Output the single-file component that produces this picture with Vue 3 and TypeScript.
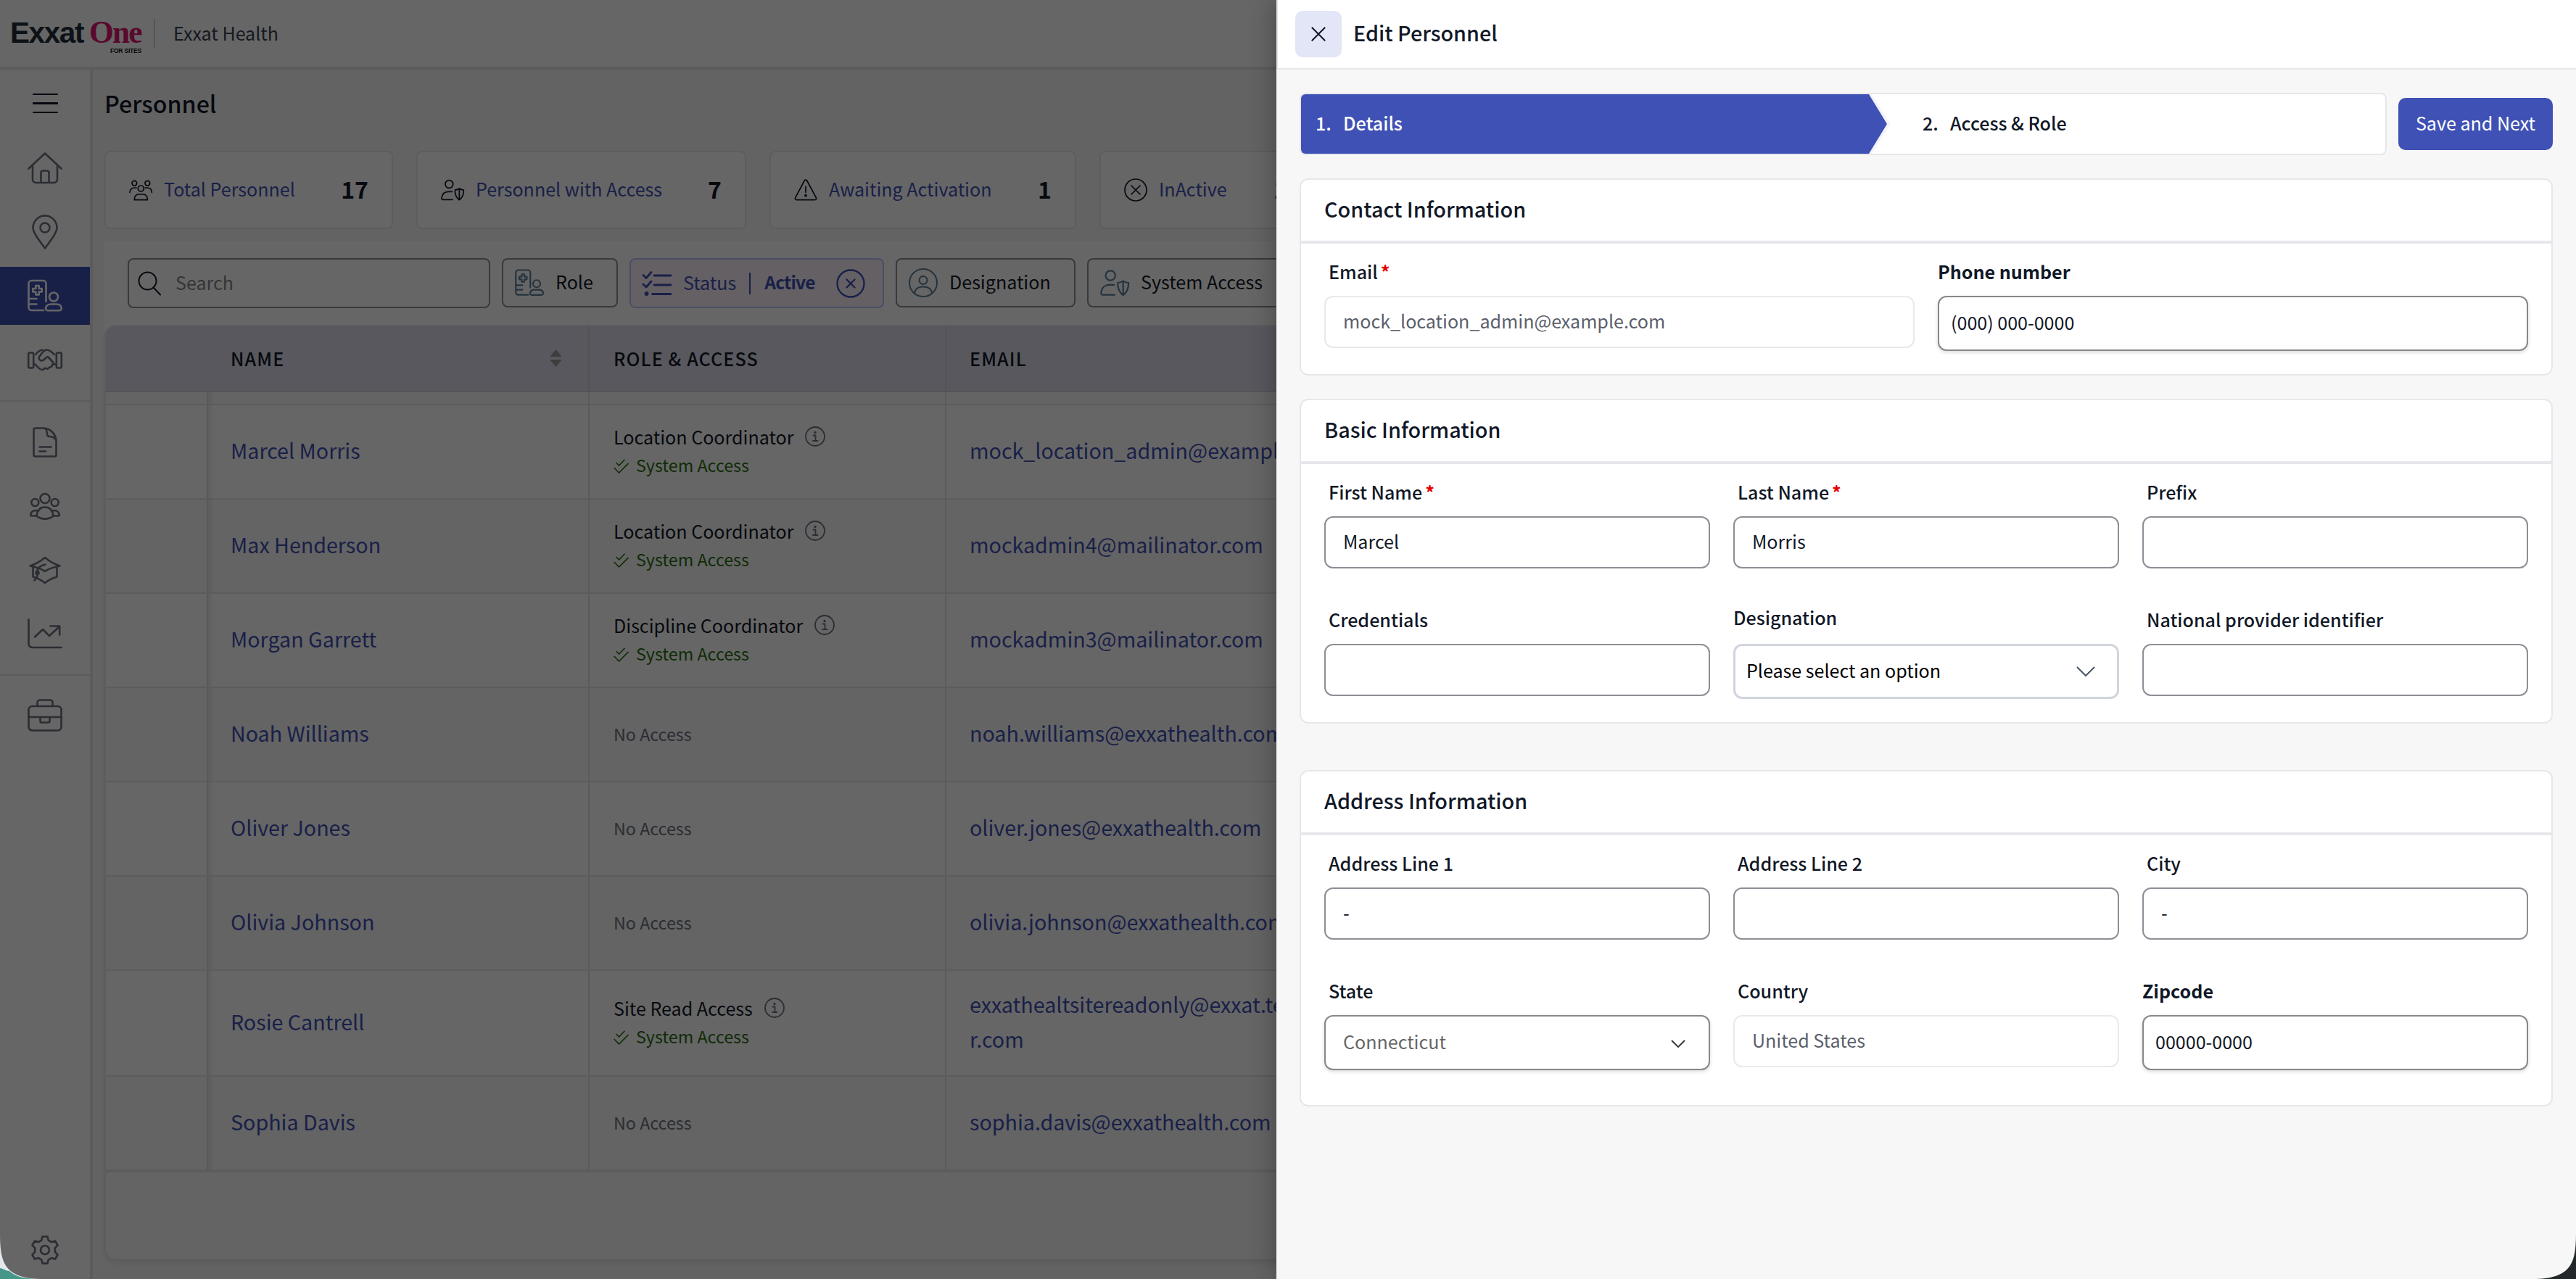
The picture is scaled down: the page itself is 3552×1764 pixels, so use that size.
<script setup lang="ts">
interface NavItem { icon: string; active?: boolean; dividerAfter?: boolean }
interface Stat { label: string; count: string; width: number; icon: string }
interface Row { name: string; role?: string; email: string[]; height: number }
interface Field {
  label: string
  value?: string
  kind?: 'muted' | 'shadow' | 'select' | 'state'
  required?: boolean
  flush?: boolean
  heavy?: boolean
}
interface Section { title: string; columns: number; fields: Field[]; cls: string }

const badge =
  '<path d="M25.5 32V7a4 4 0 0 0-4-4H5.5a4 4 0 0 0-4 4V40a4 4 0 0 0 4 4H22M1.5 28H12.5M1.5 35.5H12.5"/><path d="M11.3 10h4.4v4h4v4.4h-4v4h-4.4v-4h-4V14h4z"/><circle cx="36" cy="25.5" r="6"/><path d="M28 44.2a3 3 0 0 1-3-3.2c.6-3.8 3.6-5.500 8-5.500h6.500c4.400 0 6.900 1.700 7.300 5.500a3 3 0 0 1-3 3.200z"/>'
const userShield =
  '<circle cx="17" cy="12" r="8"/><path d="M24 44H4a2.500 2.500 0 0 1-2.500-2.500C2 32 8 27.500 16 27.500H23"/><path d="M38 21c3 2.200 5.500 3 9 3 0 10-2.500 16-9 20.500C31.500 40 29 34 29 24c3.500 0 6-.8 9-3zM38 21V44"/>'
const crossCircle = '<circle cx="24" cy="24" r="22.500"/><path d="M15 15 33 33M33 15 15 33"/>'

const nav: NavItem[] = [
  { icon: '<path d="M1.500 24.500 24 3.500 46.500 24.500M7 20V39.500a4.500 4.500 0 0 0 4.500 4.500h25a4.500 4.500 0 0 0 4.500-4.500V20M18.500 44V30a2.500 2.500 0 0 1 2.500-2.500h6a2.500 2.500 0 0 1 2.500 2.500V44"/>' },
  { icon: '<path d="M24 46.500C20 40 7.500 27 7.500 18a16.500 16.500 0 0 1 33 0C40.500 27 28 40 24 46.500z"/><circle cx="24" cy="18" r="6.500"/>' },
  { icon: badge, active: true },
  { icon: '<rect x="1.200" y="14.500" width="7" height="21" rx="2"/><rect x="39.800" y="14.500" width="7" height="21" rx="2"/><path d="M11 17c3-4 6-6 9.500-6.500M37 17c-4-4-7-6.500-10-6.500-2.500 0-4 .8-6 3l-4.500 6c-2 3 .5 7 4.500 5.500 2.500-1 4-4 7-5l7 7.500c2 2.500.5 4-1.500 4M8.500 29.500c5 2 7 8.500 11.500 8.500 2.500 0 2.500-1.500 4-2.500 3 2 5 1 6-1 3 .5 4-1.500 4.500-4H39.500"/>', dividerAfter: true },
  { icon: '<path d="M10.500 4.500H23c9 1 15.500 8 16.500 17V41.500a2 2 0 0 1-2 2h-27a2 2 0 0 1-2-2v-35a2 2 0 0 1 2-2zM23.500 4.500c3 2 3.500 5 3.500 8.500a3 3 0 0 0 3 3c4.500 0 8 2 9.500 5.500M16.500 30.500H32.500M16.500 36.500H25"/>' },
  { icon: '<circle cx="24" cy="13.500" r="6.500"/><circle cx="10.300" cy="19" r="5"/><circle cx="37.700" cy="19" r="5"/><path d="M12.500 37.500C13.500 29 18 25.500 24 25.500s10.500 3.500 11.500 12c-6 5.500-17 5.500-23 0zM12.500 37.500H5.500c-1.500 0-1.500-1-1-2.500 1-4 5-6 10-4.500M35.500 37.500h7c1.500 0 1.500-1 1-2.500-1-4-5-6-10-4.500"/>' },
  { icon: '<path d="M3.500 18.500C11 16 18 12 24 7c6 5 13 9 20.500 11.500C37 20 30 22 24 26 18 22 11 20 3.500 18.500zM7.500 20V33.500C13 35 19 38 24 42c5-4 11-7 16.500-8.500V20M24.500 16.500C19 18 14.500 21 13.500 24V33L9.500 38.500"/><circle cx="13.500" cy="28" r="2" fill="currentColor"/>' },
  { icon: '<path d="M1.500 4.500V38a5 5 0 0 0 5 5H46.500M10 28.500 21 18l9 9L44 14M31.500 13.500H44.200V25.500"/>', dividerAfter: true },
  { icon: '<rect x="1.500" y="12" width="45" height="33.500" rx="5"/><path d="M13.500 12V7a3.500 3.500 0 0 1 3.500-3.500h14a3.500 3.500 0 0 1 3.500 3.500v5M1.500 27H46.500M17.500 27v5.500a2 2 0 0 0 2 2h9a2 2 0 0 0 2-2V27"/>' },
]

const stats: Stat[] = [
  { label: 'Total Personnel', count: '17', width: 398, icon: '<circle cx="11" cy="10" r="5"/><circle cx="38" cy="10" r="5"/><circle cx="24.500" cy="21" r="6"/><path d="M1.500 29c.5-7 4-9.500 9.500-9.500h4M47 29c-.5-7-4-9.500-9.500-9.500h-4M11 44.500c0-8 4-11.500 9-11.500h9c5 0 9 3.500 9 11.500z"/>' },
  { label: 'Personnel with Access', count: '7', width: 455, icon: userShield },
  { label: 'Awaiting Activation', count: '1', width: 423, icon: '<path d="M21.500 4.500a3 3 0 0 1 5 0L45.500 40a3 3 0 0 1-2.500 4.500H5A3 3 0 0 1 2.500 40zM24 17V29"/><circle cx="24" cy="35.500" r="1.500" fill="currentColor"/>' },
  { label: 'InActive', count: '1', width: 293, icon: crossCircle },
]

const rows: Row[] = [
  { name: 'Marcel Morris', role: 'Location Coordinator', email: ['mock_location_admin@example.com'], height: 130 },
  { name: 'Max Henderson', role: 'Location Coordinator', email: ['mockadmin4@mailinator.com'], height: 130 },
  { name: 'Morgan Garrett', role: 'Discipline Coordinator', email: ['mockadmin3@mailinator.com'], height: 130 },
  { name: 'Noah Williams', email: ['noah.williams@exxathealth.com'], height: 130 },
  { name: 'Oliver Jones', email: ['oliver.jones@exxathealth.com'], height: 130 },
  { name: 'Olivia Johnson', email: ['olivia.johnson@exxathealth.com'], height: 130 },
  { name: 'Rosie Cantrell', role: 'Site Read Access', email: ['exxathealtsitereadonly@exxat.te', 'r.com'], height: 146 },
  { name: 'Sophia Davis', email: ['sophia.davis@exxathealth.com'], height: 130 },
]

const sections: Section[] = [
  {
    title: 'Contact Information', columns: 2, cls: '',
    fields: [
      { label: 'Email', value: 'mock_location_admin@example.com', kind: 'muted', required: true },
      { label: 'Phone number', value: '(000) 000-0000', kind: 'shadow', flush: true, heavy: true },
    ],
  },
  {
    title: 'Basic Information', columns: 3, cls: 'basic',
    fields: [
      { label: 'First Name', value: 'Marcel', required: true },
      { label: 'Last Name', value: 'Morris', required: true },
      { label: 'Prefix' },
      { label: 'Credentials' },
      { label: 'Designation', value: 'Please select an option', kind: 'select', flush: true },
      { label: 'National provider identifier' },
    ],
  },
  {
    title: 'Address Information', columns: 3, cls: 'address',
    fields: [
      { label: 'Address Line 1', value: '-' },
      { label: 'Address Line 2' },
      { label: 'City', value: '-' },
      { label: 'State', value: 'Connecticut', kind: 'state' },
      { label: 'Country', value: 'United States', kind: 'muted' },
      { label: 'Zipcode', value: '00000-0000', kind: 'shadow', flush: true, heavy: true },
    ],
  },
]
</script>

<template>
  <div class="screen">
    <div class="app">
      <header class="topbar">
        <div class="logo">
          <div class="logo-row"><span class="logo-a">Exxat</span><span class="logo-b">One</span></div>
          <span class="logo-sub">FOR SITES</span>
        </div>
        <span class="bar"></span>
        <span class="org">Exxat Health</span>
      </header>
      <div class="below">
        <nav class="side">
          <div class="burger"><i></i><i></i><i></i></div>
          <template v-for="(n, i) in nav" :key="i">
            <div class="nav" :class="{ active: n.active }">
              <svg viewBox="0 0 48 48" class="ic48" v-html="n.icon"></svg>
            </div>
            <div v-if="n.dividerAfter" class="nav-div"></div>
          </template>
          <div class="gear">
            <svg viewBox="0 0 48 48" class="ic48">
              <circle cx="24" cy="24" r="6" />
              <path d="M20.500 5.500h7l1.300 5.200a14 14 0 0 1 4 2.300l5.200-1.500 3.500 6-3.800 3.800a14 14 0 0 1 0 5.400l3.800 3.800-3.500 6-5.200-1.500a14 14 0 0 1-4 2.300l-1.300 5.200h-7l-1.300-5.200a14 14 0 0 1-4-2.300L10 36.500l-3.500-6 3.800-3.800a14 14 0 0 1 0-5.400L6.500 17.500l3.500-6 5.200 1.500a14 14 0 0 1 4-2.300z" />
            </svg>
          </div>
        </nav>
        <main class="main">
          <h1 class="title">Personnel</h1>
          <div class="stats">
            <div v-for="s in stats" :key="s.label" class="stat" :style="{ width: s.width + 'px' }">
              <svg viewBox="0 0 48 48" class="ic32" v-html="s.icon"></svg>
              <span class="stat-label">{{ s.label }}</span>
              <span class="stat-count">{{ s.count }}</span>
            </div>
          </div>
          <section class="panel">
            <div class="tools">
              <div class="search">
                <svg viewBox="0 0 32 34" width="34" height="34" class="ln"><circle cx="13.500" cy="13.500" r="12" /><path d="M21.500 22.500 31 32.500" /></svg>
                <span>Search</span>
              </div>
              <div class="chip role-chip"><svg viewBox="0 0 48 48" class="ic40" v-html="badge"></svg><span>Role</span></div>
              <div class="chip status-chip">
                <svg viewBox="0 0 40 34" width="40" height="34" class="ln thick"><path d="M1 5.500 5 9.500 12 1.500M16 6H39M1 18 5 22 12 14M16 19H39M13.500 31.500H39" /><circle cx="5.500" cy="31" r="1.500" fill="currentColor" /></svg>
                <span class="st">Status</span><i class="st-bar"></i><b>Active</b>
                <svg viewBox="0 0 40 40" width="40" height="40" class="ln thick x"><circle cx="20" cy="20" r="18.500" /><path d="M14.500 14.500 25.500 25.500M25.500 14.500 14.500 25.500" /></svg>
              </div>
              <div class="chip desig-chip">
                <svg viewBox="0 0 40 40" width="40" height="40" class="ln"><circle cx="20" cy="20" r="19" /><circle cx="20" cy="16.500" r="5.500" /><path d="M8 34c1-6 5-8.500 12-8.500S31 28 32 34" /></svg>
                <span>Designation</span>
              </div>
              <div class="chip access-chip"><svg viewBox="0 0 48 48" class="ic40" v-html="userShield"></svg><span>System Access</span></div>
            </div>
            <div class="table">
              <div class="thead">
                <div class="c0"></div>
                <div class="c1">NAME
                  <svg viewBox="0 0 15 24" width="15" height="24"><path d="M7.500 0 15 9v1H0V9zM7.500 24 15 15v-1H0v1z" fill="currentColor" /></svg>
                </div>
                <div class="c2">ROLE &amp; ACCESS</div>
                <div class="c3">EMAIL</div>
              </div>
              <div class="trow stub"><div class="c0"></div><div class="c1"></div><div class="c2"></div><div class="c3"></div></div>
              <div v-for="r in rows" :key="r.name" class="trow" :style="{ height: r.height + 'px' }">
                <div class="c0"></div>
                <div class="c1 link">{{ r.name }}</div>
                <div class="c2">
                  <template v-if="r.role">
                    <div class="role">{{ r.role }}
                      <svg viewBox="0 0 28 28" width="28" height="28" class="ln"><circle cx="14" cy="14" r="13" /><path d="M11.500 12.500h3v7.500M11 20h6.500" /><circle cx="14" cy="8.500" r=".8" fill="currentColor" /></svg>
                    </div>
                    <div class="granted">
                      <svg viewBox="0 0 21 20" width="21" height="20"><path d="M3.500 5 7.500 9 15.500 .8M.8 12 7.500 19 20.500 6" /></svg>
                      System Access
                    </div>
                  </template>
                  <span v-else class="none">No Access</span>
                </div>
                <div class="c3 link"><span v-for="l in r.email" :key="l">{{ l }}</span></div>
              </div>
              <div class="tfoot"></div>
            </div>
          </section>
        </main>
      </div>
    </div>
    <div class="scrim"></div>

    <aside class="drawer">
      <header class="d-head">
        <div class="close"><svg viewBox="0 0 20 20" width="20" height="20"><path d="M.8 .8 19.200 19.200M19.200 .8 .8 19.200" /></svg></div>
        <h2>Edit Personnel</h2>
      </header>
      <div class="d-body">
        <div class="steps-row">
          <div class="steps">
            <div class="step one"><svg class="arrow" viewBox="0 0 34 82" width="34" height="82"><path d="M0 0H4L29.500 41 4 82H0z" fill="#f3f4f6" /><path d="M0 0 25 41 0 82z" fill="#3f51b5" /></svg><span class="num">1.</span><span>Details</span></div>
            <div class="step two"><span class="num">2.</span><span>Access &amp; Role</span></div>
          </div>
          <button class="save">Save and Next</button>
        </div>
        <section v-for="s in sections" :key="s.title" class="card" :class="s.cls">
          <h3>{{ s.title }}</h3>
          <div class="fields" :class="'cols' + s.columns">
            <div v-for="f in s.fields" :key="f.label" class="field">
              <div class="label" :class="[f.kind, { flush: f.flush, heavy: f.heavy }]">{{ f.label }}<sup v-if="f.required">*</sup></div>
              <div class="box" :class="f.kind">
                <span>{{ f.value }}</span>
                <svg v-if="f.kind === 'select'" viewBox="0 0 26 14" width="26" height="14"><path d="M1 1 13 13 25 1" /></svg>
                <svg v-if="f.kind === 'state'" viewBox="0 0 20 11" width="20" height="11"><path d="M1 1 10 10 19 1" /></svg>
              </div>
            </div>
          </div>
        </section>
      </div>
    </aside>

    <svg class="corner left" viewBox="0 0 64 64" width="64" height="64">
      <path d="M0 0C0 42 6 64 60 64H0z" fill="#e3e8ec" />
      <path d="M0 49C6 50 8 53 13 53C22 61 32 64 60 64H0z" fill="#46978a" />
    </svg>
    <svg class="corner right" viewBox="0 0 64 64" width="64" height="64"><path d="M64 0C64 42 58 64 4 64H64z" fill="#22282a" /></svg>
  </div>
</template>

<style>
body { margin: 0; overflow: hidden; }
</style>

<style scoped>
.screen {
  position: relative; width: 3552px; height: 1764px; overflow: hidden;
  font-family: "Noto Sans CJK SC", "Noto Sans", sans-serif;
  font-size: 25.07px; line-height: 36px; color: #111827; background: #fff;
}
.screen *, .screen { box-sizing: border-box; }
h1, h2, h3 { margin: 0; font-weight: 500; }
i { font-style: normal; }
.app { height: 100%; display: flex; flex-direction: column; background: #f7f7f7; }
.scrim { position: absolute; inset: 0; background: rgba(0, 0, 0, .6); }
.ln, .ic48, .ic40, .ic32 { fill: none; stroke: currentColor; stroke-width: 2; stroke-linecap: round; stroke-linejoin: round; flex: none; overflow: visible; }

.topbar { height: 96px; background: #fff; border-bottom: 4px solid #e5e7eb; display: flex; align-items: center; padding-left: 14px; flex: none; }
.logo { width: 182px; height: 60px; margin-top: 9px; display: flex; flex-direction: column; }
.logo-row { display: flex; gap: 8px; align-items: baseline; height: 46px; line-height: 46px; }
.logo-a { font: 700 40.500px/46px "Liberation Sans", sans-serif; letter-spacing: -1.400px; color: #1f2f3a; }
.logo-b { font: 700 43.500px/46px "Liberation Serif", serif; letter-spacing: -1.900px; color: #e0156f; }
.logo-sub { font: 700 8.500px/10px "Liberation Sans", sans-serif; color: #111; text-align: right; letter-spacing: -.2px; margin-top: -2px; padding-right: 1px; }
.bar { width: 2px; height: 40px; background: #d1d5db; margin: 0 25px 0 16px; }
.org { color: #374151; padding-bottom: 3px; }

.below { flex: 1; display: flex; min-height: 0; }
.side { width: 128px; background: #fff; border-right: 4px solid #e5e7eb; flex: none; display: flex; flex-direction: column; color: #6b7280; }
.burger { height: 93px; margin-bottom: -1px; flex: none; display: flex; flex-direction: column; align-items: center; justify-content: center; gap: 10px; }
.burger i { width: 35px; height: 2.500px; border-radius: 1px; background: #111827; }
.nav { height: 88px; display: flex; align-items: center; justify-content: center; flex: none; }
.nav.active { height: 80px; margin: 4px 0; background: #3f51b5; color: #fff; }
.ic48 { width: 48px; height: 48px; stroke-width: 2.600; }
.nav-div { height: 2px; background: #e5e7eb; margin: 12px 0; flex: none; }
.nav-div:nth-last-of-type(3) { margin-bottom: 10px; }
.gear { margin-top: auto; height: 81px; display: flex; align-items: center; justify-content: center; }

.main { flex: 1; padding: 0 0 0 16px; display: flex; flex-direction: column; min-width: 0; }
.title { font-size: 32.200px; line-height: 92px; height: 112px; flex: none; }
.stats { display: flex; gap: 32px; height: 108px; flex: none; }
.stat { flex: none; background: #fff; border: 2px solid #e9e9e9; border-radius: 8px; display: flex; align-items: center; padding: 0 32px; }
.ic32 { width: 32px; height: 32px; stroke-width: 2.600; }
.stat-label { margin-left: 16px; color: #3f51b5; padding-bottom: 4px; white-space: nowrap; }
.stat-count { margin-left: auto; font-size: 32px; font-weight: 600; padding-bottom: 4px; }
.panel { margin-top: 16px; background: #fff; flex: 1; display: flex; flex-direction: column; margin-bottom: 26px; border-radius: 0 0 16px 16px; }
.tools { height: 116px; padding: 24px 0 0 32px; display: flex; gap: 16px; flex: none; }
.search { width: 500px; height: 69px; border: 2px solid #8f8f8f; border-radius: 8px; display: flex; align-items: center; padding: 0 0 0 11px; color: #111827; flex: none; }
.search span { color: #858585; margin-left: 19px; padding-bottom: 4px; }
.chip { height: 68px; border: 2px solid #8f8f8f; border-radius: 8px; display: flex; align-items: center; padding-left: 16px; flex: none; white-space: nowrap; color: #5d7f99; }
.chip span { color: #111827; margin-left: 16px; padding-bottom: 4px; }
.ic40 { width: 40px; height: 40px; stroke-width: 2.600; }
.role-chip { width: 160px; }
.status-chip { width: 351px; height: 69px; background: #f9f1f9; border-color: #b9c3fb; color: #3f51b5; }
.status-chip .st { color: #3f51b5; }
.status-chip b { font-weight: 600; padding-bottom: 4px; font-size: 24.500px; letter-spacing: -.8px; }
.st-bar { width: 2px; height: 30px; background: #3f51b5; margin: 0 19px 0 18px; }
.thick { stroke-width: 2.800; }
.x { margin-left: auto; margin-right: 24px; stroke-width: 2.300; }
.desig-chip { width: 248px; }
.access-chip { width: 300px; }

.table { flex: 1; border: 2px solid #e5e7eb; border-right: 0; border-radius: 16px 0 0 16px; overflow: hidden; display: flex; flex-direction: column; background: #f9f9fa; box-shadow: 0 4px 6px rgba(0, 0, 0, .08); }
.thead, .trow { display: grid; grid-template-columns: 141px 526px 492px 1fr; flex: none; }
.thead { height: 91px; background: #dcdcea; border-bottom: 2px solid #d2d3da; font-weight: 500; letter-spacing: 1.120px; }
.thead > div { display: flex; align-items: center; }
.thead svg { color: #999; margin-left: auto; margin-right: 37px; }
.c0 { border-right: 2px solid #dcdce8; }
.c1, .c2 { border-right: 2px solid #e2e3e6; }
.thead .c1, .thead .c2 { border-color: #cfcfd8; }
.c1, .c2, .c3 { padding-left: 32px; padding-bottom: 4px; white-space: nowrap; min-width: 0; }
.c1 { padding-left: 31px; }
.c2 { padding-left: 33px; }
.thead .c1, .thead .c2, .thead .c3 { padding-bottom: 1px; }
.trow .c1 { background: linear-gradient(90deg, rgba(63, 81, 181, .10), rgba(63, 81, 181, 0) 8px); }
.trow { background: #fff; border-bottom: 2px solid #e5e7eb; }
.trow:nth-child(even) { background: #f9f9fa; }
.stub { height: 18px; }
.trow > div { display: flex; flex-direction: column; justify-content: center; }
.link { color: #3f51b5; font-size: 28.650px; line-height: 48px; }
.role { display: flex; align-items: center; line-height: 38px; }
.role svg { margin-left: 16px; color: #6b7280; stroke-width: 1.800; margin-top: -1px; }
.granted { font-size: 23.280px; line-height: 40px; height: 38px; color: #2a6f0f; display: flex; align-items: center; padding-top: 1px; }
.granted svg { fill: none; stroke: #2a6f0f; stroke-width: 1.600; margin-right: 10px; margin-top: 5px; }
.none { font-size: 23.280px; color: #6b7280; padding-top: 2px; }
.tfoot { flex: 1; border-top: 2px solid #e5e7eb; }

.drawer { position: absolute; left: 1760px; top: 0; width: 1792px; height: 1764px; background: #f7f7f7; box-shadow: 0 0 36px rgba(0, 0, 0, .32); display: flex; flex-direction: column; }
.d-head { height: 96px; background: #fff; border-bottom: 2px solid #e5e7eb; border-left: 2px solid #e5e7eb; display: flex; align-items: center; padding-left: 24px; flex: none; }
.close { width: 64px; height: 64px; border-radius: 10px; background: #e2e6f6; display: flex; align-items: center; justify-content: center; }
.close svg, .box svg { fill: none; stroke: #111827; stroke-width: 2; }
.d-head h2 { font-size: 28.700px; margin-left: 16px; padding-bottom: 4px; }
.d-body { padding: 32px; display: flex; flex-direction: column; }
.steps-row { display: flex; align-items: center; gap: 16px; height: 86px; margin-bottom: 32px; }
.steps { flex: 1; height: 86px; border: 2px solid #e5e7eb; border-radius: 8px; background: #fff; display: flex; }
.step { display: flex; align-items: center; font-weight: 500; padding-bottom: 4px; }
.one { position: relative; width: 783px; background: #3f51b5; color: #fff; border-radius: 6px 0 0 6px; padding-left: 20px; }
.arrow { position: absolute; left: 100%; top: 0; }
.two { padding-left: 74px; }
.num { width: 38px; }
.save { width: 213px; height: 72px; border: 0; border-radius: 10px; background: #3f51b5; color: #fff; font: inherit; padding: 0 0 4px; white-space: nowrap; }
.card { background: #fff; border: 2px solid #e5e7eb; border-radius: 12px; margin-bottom: 32px; }
.basic { margin-bottom: 64px; }
.card h3 { font-size: 28.750px; height: 84px; line-height: 80px; padding-left: 32px; }
.fields { border-top: 4px solid #e5e7eb; padding: 20px 32px 36px; display: grid; column-gap: 32px; row-gap: 52px; grid-auto-rows: 124px; }
.address .fields { padding-bottom: 52px; }
.cols2 { grid-template-columns: 1fr 1fr; }
.cols3 { grid-template-columns: 1fr 1fr 1fr; }
.label { height: 52px; padding-left: 6px; font-weight: 500; display: flex; }
.label sup { color: #e80000; font-size: 25px; line-height: 36px; margin-left: 4px; font-weight: 700; }
.label.flush { padding-left: 0; }
.label.select { margin-top: -3px; height: 55px; }
.label.heavy { font-weight: 700; }
.box { height: 72px; border: 2px solid #8e8e96; border-radius: 12px; background: #fff; display: flex; align-items: center; justify-content: space-between; padding: 0 24px 4px; }
.box.muted { border-color: #e9e9ed; color: #5b5f6b; }
.box.shadow { height: 76px; border-color: #888; padding-left: 16px; box-shadow: 0 2px 5px rgba(0, 0, 0, .15); }
.box.select { height: 76px; border: 3px solid #d0d5dd; padding: 0 30px 0 15px; color: #000; }
.box.select span { padding-bottom: 4px; }
.box.select svg { stroke: #475569; }
.box.state { height: 76px; border-color: #888; color: #666; padding: 0 32px 4px 24px; box-shadow: 0 2px 5px rgba(0, 0, 0, .15); }
.box.state svg { stroke: #333; stroke-width: 1.800; margin-top: 6px; }
.corner { position: absolute; bottom: 0; }
.corner.left { left: 0; }
.corner.right { right: 0; }
</style>
